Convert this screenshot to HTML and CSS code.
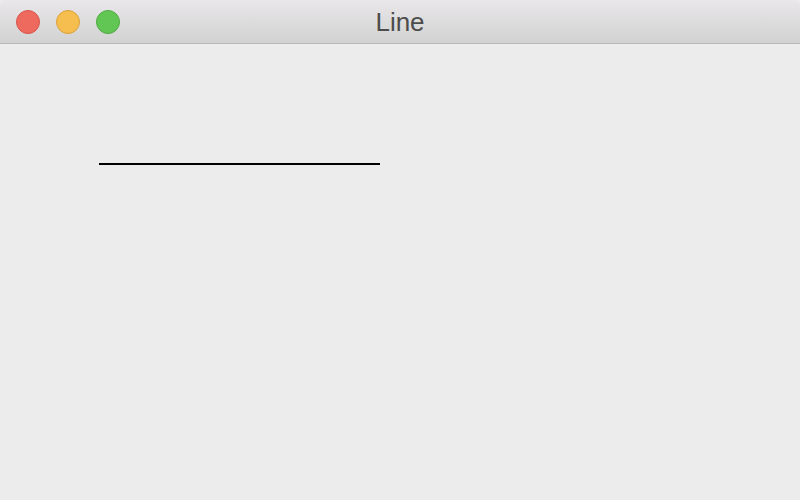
FILE: index.html
```html
<!DOCTYPE html>
<html>
<head>
<meta charset="utf-8">
<title>Line</title>
<link rel="stylesheet" href="styles.css">
</head>
<body>
<div class="window">
  <div class="titlebar">
    <div class="lights">
      <span class="light close"></span>
      <span class="light min"></span>
      <span class="light max"></span>
    </div>
    <div class="title">Line</div>
  </div>
  <div class="content">
    <div class="line"></div>
  </div>
</div>
</body>
</html>
```

FILE: styles.css
```css
html, body {
  margin: 0;
  padding: 0;
  width: 800px;
  height: 500px;
  overflow: hidden;
  background: #ececec;
  font-family: "Liberation Sans", Arial, sans-serif;
}
.window {
  width: 800px;
  height: 500px;
  display: flex;
  flex-direction: column;
  background: #ececec;
  border-radius: 6px 6px 0 0;
  overflow: hidden;
}
.titlebar {
  position: relative;
  height: 43px;
  flex: 0 0 43px;
  background: linear-gradient(#e9e7e9, #d2d2d2);
  border-bottom: 1px solid #b9b9b9;
  display: flex;
  align-items: center;
  justify-content: center;
}
.lights {
  position: absolute;
  left: 16px;
  top: 10px;
  display: flex;
  gap: 16px;
}
.light {
  width: 24px;
  height: 24px;
  border-radius: 50%;
  box-sizing: border-box;
}
.close { background: #ee6a5f; border: 1px solid #d8554a; }
.min { background: #f5be4f; border: 1px solid #dba23a; }
.max { background: #62c655; border: 1px solid #4faa41; }
.title {
  font-size: 26px;
  color: #4c4c4c;
  margin-top: 1px;
}
.content {
  flex: 1;
  padding: 119px 0 0 99px;
}
.line {
  width: 281px;
  height: 2px;
  background: #000;
}
```
